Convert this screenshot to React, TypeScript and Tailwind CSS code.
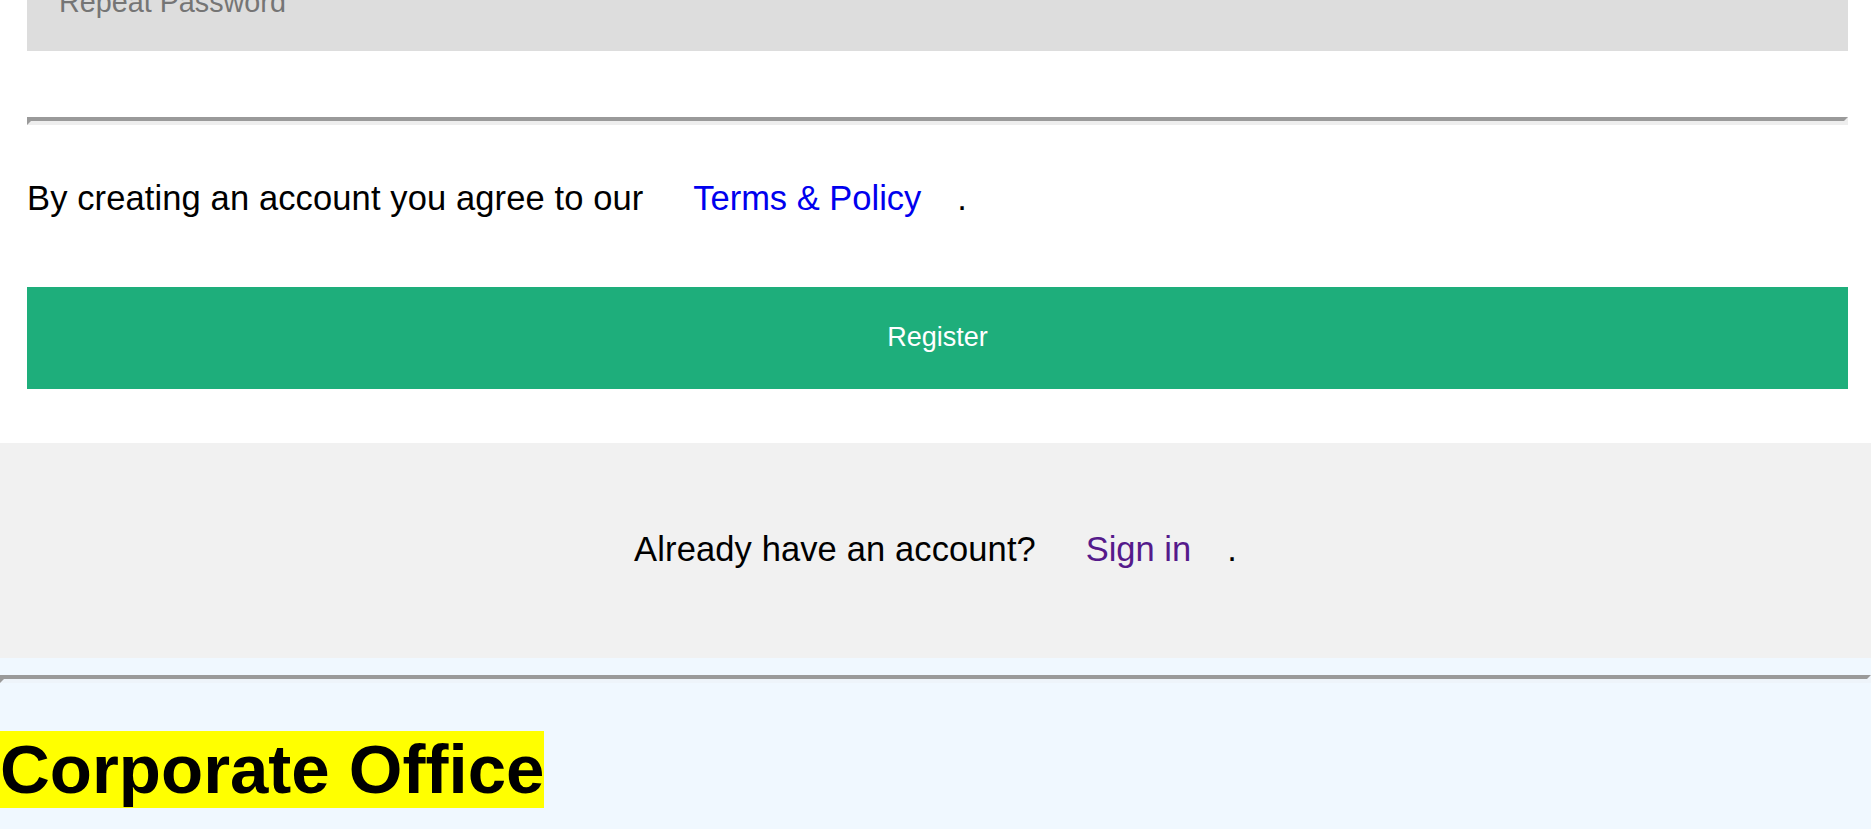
// Register form (scrolled view) with sign-in strip and office heading
export default function App() {
  return (
    <div className="min-h-[829px] bg-[#f0f8ff] font-['Liberation_Sans',Arial,sans-serif] text-black">
      {/* Form */}
      <div className="bg-white pl-[27px] pr-[23px]">
        <div className="h-[51px] overflow-hidden flex flex-col justify-end">
          <input
            type="password"
            placeholder="Repeat Password"
            className="block w-full h-[98px] shrink-0 px-[32px] bg-[#dddddd] text-[28.75px] outline-none placeholder:text-[#757575]"
          />
        </div>

        <hr className="mt-[66px] h-0 border-solid border-t-[4px] border-l-[4px] border-b-[4px] border-r-[4px] border-t-[#9a9a9a] border-l-[#9a9a9a] border-b-[#eeeeee] border-r-[#eeeeee]" />

        <p className="mt-[54px] text-[34.5px] leading-[39.6px] tracking-[0.12px]">
          By creating an account you agree to our{' '}
          <a href="#" className="pl-[40px] pr-[36px] text-[#0000ee] tracking-normal">
            Terms &amp; Policy
          </a>
          .
        </p>

        <button
          type="button"
          className="mt-[68px] block w-full h-[102px] bg-[#1eae7b] text-white text-[27px]"
        >
          Register
        </button>

        <div className="h-[54px]" />
      </div>

      {/* Sign in */}
      <div className="bg-[#f1f1f1] py-[87.7px] text-center text-[34.5px] leading-[39.6px] tracking-[0.12px]">
        Already have an account?{' '}
        <a href="#" className="pl-[40px] pr-[36px] text-[#551a8b] tracking-normal">
          Sign in
        </a>
        .
      </div>

      {/* Office */}
      <hr className="mt-[17px] h-0 border-solid border-t-[4px] border-l-[4px] border-b-[4px] border-r-[4px] border-t-[#9a9a9a] border-l-[#9a9a9a] border-b-[#eef4fa] border-r-[#eef4fa]" />

      <h1 className="mt-[47px] text-[69px] font-bold leading-[79px]">
        <span className="bg-[#ffff00]">Corporate Office</span>
      </h1>
    </div>
  );
}
